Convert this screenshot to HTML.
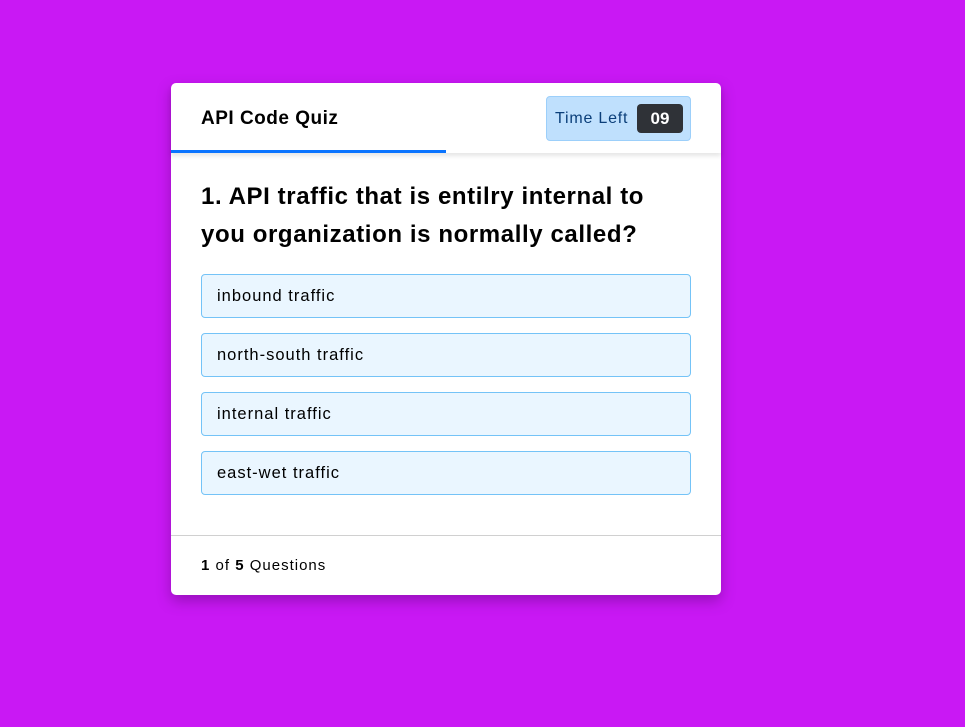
<!DOCTYPE html>
<html><head><meta charset="utf-8"><style>
*{box-sizing:border-box;margin:0;padding:0}
body{width:965px;height:727px;background:#c918f4;font-family:"Liberation Sans",sans-serif;position:relative;overflow:hidden}
.card{position:absolute;left:171px;top:83px;width:550px;height:512px;background:#fff;border-radius:5px;box-shadow:0 6px 14px rgba(60,0,80,.35)}
.hdr{position:absolute;left:0;top:0;width:550px;height:70px;box-shadow:0 3px 5px rgba(0,0,0,.1);border-radius:5px 5px 0 0}
.title{position:absolute;left:30px;top:25px;font-size:19px;font-weight:bold;color:#000;letter-spacing:.5px}
.bar{position:absolute;left:0;top:67px;width:275px;height:3px;background:#0a74ff}
.time{position:absolute;left:375px;top:13px;width:145px;height:45px;background:#bfe0fd;border:1px solid #9ccffa;border-radius:4px}
.time span{position:absolute;left:8px;top:13px;font-size:16px;color:#0b3f7a;letter-spacing:.8px}
.time b{position:absolute;left:90px;top:7px;width:46px;height:29px;background:#2f3237;color:#fff;border-radius:4px;font-size:17px;text-align:center;line-height:29px}
.q{position:absolute;left:30px;top:95px;width:470px;font-size:24px;font-weight:bold;line-height:38px;color:#000;letter-spacing:.6px}
.opt{position:absolute;left:30px;width:490px;height:44px;background:#eaf6ff;border:1px solid #74c3f7;border-radius:4px;font-size:16.5px;padding-left:15px;line-height:43px;color:#000;letter-spacing:1px}
.foot{position:absolute;left:0;top:452px;width:550px;border-top:1px solid #d0d0d0}
.ft{position:absolute;left:30px;top:474px;font-size:15px;color:#000;letter-spacing:1px}
</style></head><body>
<div class="card">
<div class="hdr"><div class="title">API Code Quiz</div><div class="bar"></div>
<div class="time"><span>Time Left</span><b>09</b></div></div>
<div class="q">1. API traffic that is entilry internal to you organization is normally called?</div>
<div class="opt" style="top:191px">inbound traffic</div>
<div class="opt" style="top:250px">north-south traffic</div>
<div class="opt" style="top:309px">internal traffic</div>
<div class="opt" style="top:368px">east-wet traffic</div>
<div class="foot"></div>
<div class="ft"><b>1</b> of <b>5</b> Questions</div>
</div>
</body></html>
